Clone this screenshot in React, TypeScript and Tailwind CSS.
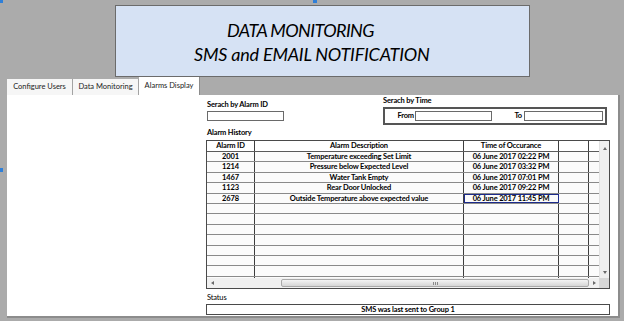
import React from 'react';

type Alarm = { id: string; desc: string; time: string };

const ALARMS: Alarm[] = [
  { id: '2001', desc: 'Temperature exceeding Set Limit', time: '06 June 2017 02:22 PM' },
  { id: '1214', desc: 'Pressure below Expected Level', time: '06 June 2017 03:32 PM' },
  { id: '1467', desc: 'Water Tank Empty', time: '06 June 2017 07:01 PM' },
  { id: '1123', desc: 'Rear Door Unlocked', time: '06 June 2017 09:22 PM' },
  { id: '2678', desc: 'Outside Temperature above expected value', time: '06 June 2017 11:45 PM' },
];

const EMPTY_ROWS = 8;

const TableRow = ({ alarm, selected }: { alarm?: Alarm; selected?: boolean }) => (
  <div className="flex h-[10.4px] shrink-0 border-b border-[#8a8a8a] bg-[#fbfbfb]">
    <div className="w-[48px] border-r border-[#3d3d3d] flex items-center justify-center">{alarm?.id}</div>
    <div className="w-[209px] border-r border-[#3d3d3d] flex items-center justify-center whitespace-nowrap overflow-hidden">
      {alarm?.desc}
    </div>
    <div
      className={
        selected
          ? 'w-[95px] border-r border-[#3d3d3d] flex items-center justify-center outline outline-1 -outline-offset-1 outline-[#1c2a8a]'
          : 'w-[95px] border-r border-[#3d3d3d] flex items-center justify-center'
      }
    >
      {alarm?.time}
    </div>
    <div className="w-[30px] border-r border-[#3d3d3d]"></div>
    <div className="w-[10px]"></div>
  </div>
);

const Arrow = ({ dir }: { dir: 'up' | 'down' | 'left' | 'right' }) => {
  const pts = {
    up: '0,3 2,0 4,3',
    down: '0,0 2,3 4,0',
    left: '3,0 0,2 3,4',
    right: '0,0 3,2 0,4',
  }[dir];
  const size = dir === 'up' || dir === 'down' ? { w: 4, h: 3 } : { w: 3, h: 4 };
  return (
    <svg width={size.w} height={size.h} viewBox={`0 0 ${size.w} ${size.h}`}>
      <polygon points={pts} fill="#6a6a6a" />
    </svg>
  );
};

const App: React.FC = () => {
  return (
    <div className="relative w-[624px] h-[321px] overflow-hidden bg-[#ababab] font-['Lato','Noto_Sans',sans-serif] text-black">
      {/* designer selection handles */}
      <div className="absolute left-0 top-0 w-[3px] h-[3px] bg-[#2f7fd8]"></div>
      <div className="absolute left-[313px] top-0 w-[4px] h-[3px] bg-[#2f7fd8]"></div>
      <div className="absolute left-0 top-[168px] w-[3px] h-[4px] bg-[#2f7fd8]"></div>

      {/* title banner */}
      <div className="pt-[5px]">
        <div className="ml-[115px] w-[415px] h-[72px] border border-[#6b6b6b] bg-[#d6e2f4] pt-[12px] italic text-[18px] leading-[24px] text-black">
          <div className="ml-[111px] tracking-[-0.6px]">DATA MONITORING</div>
          <div className="ml-[78px] tracking-[-0.2px]">SMS and EMAIL NOTIFICATION</div>
        </div>
      </div>

      {/* tabs */}
      <div className="ml-[7px] flex items-end h-[18px] text-[7.5px] text-[#222]">
        <div className="w-[66px] h-[16px] bg-[#f6f6f6] border-r border-[#a3a3a3] flex items-center justify-center">
          Configure Users
        </div>
        <div className="w-[66px] h-[16px] bg-[#f6f6f6] border-r border-[#a3a3a3] flex items-center justify-center">
          Data Monitoring
        </div>
        <div className="w-[61px] h-[18px] bg-white border-r border-[#8c8c8c] flex items-start justify-center pt-[3px]">
          Alarms Display
        </div>
      </div>

      {/* tab panel */}
      <div className="ml-[7px] w-[613px] h-[223px] bg-white border-r-2 border-b-2 border-[#8c8c8c] pl-[199px] text-[7.5px] font-bold tracking-[-0.15px]">
        <div className="flex">
          <div className="w-[177px] pt-[5px]">
            <div className="h-[10px] leading-[10px] pl-[1px]">Serach by Alarm ID</div>
            <div className="mt-[1px] ml-[1px] w-[77px] h-[10px] border border-[#6a6a6a] bg-white"></div>
          </div>
          <div className="pt-[1px]">
            <div className="h-[10px] leading-[10px]">Serach by Time</div>
            <div className="mt-[1px] w-[224px] h-[18px] border-2 border-[#555] flex items-center">
              <div className="w-[30px] text-right pr-[1px]">From</div>
              <div className="w-[77px] h-[10px] border border-[#6a6a6a] bg-white"></div>
              <div className="w-[32px] text-right pr-[2px]">To</div>
              <div className="w-[79px] h-[10px] border border-[#6a6a6a] bg-white"></div>
            </div>
          </div>
        </div>

        <div className="mt-[3px] h-[10px] leading-[10px] pl-[1px]">Alarm History</div>

        {/* alarm table */}
        <div className="mt-[2px] w-[404px] border border-[#4a4a4a]">
          <div className="flex">
            <div className="w-[392px] h-[137px] overflow-hidden flex flex-col">
              <div className="flex h-[11px] shrink-0 border-b border-[#5a5a5a] bg-white">
                <div className="w-[48px] border-r border-[#3d3d3d] flex items-center justify-center">Alarm ID</div>
                <div className="w-[209px] border-r border-[#3d3d3d] flex items-center justify-center">Alarm Description</div>
                <div className="w-[95px] border-r border-[#3d3d3d] flex items-center justify-center">Time of Occurance</div>
                <div className="w-[30px] border-r border-[#3d3d3d]"></div>
                <div className="w-[10px]"></div>
              </div>
              {ALARMS.map((a, i) => (
                <TableRow key={a.id} alarm={a} selected={i === ALARMS.length - 1} />
              ))}
              {Array.from({ length: EMPTY_ROWS }).map((_, i) => (
                <TableRow key={`empty-${i}`} />
              ))}
            </div>
            <div className="w-[10px] h-[137px] bg-[#f0f0f0] border-l border-[#e2e2e2] flex flex-col items-center justify-between pt-[6px] pb-[4px]">
              <Arrow dir="up" />
              <Arrow dir="down" />
            </div>
          </div>
          <div className="flex h-[10px]">
            <div className="w-[392px] bg-[#f0f0f0] flex items-center">
              <div className="w-[10px] flex justify-center">
                <Arrow dir="left" />
              </div>
              <div className="ml-[64px] w-[308px] h-[8px] rounded-[2px] border border-[#a9a9a9] bg-gradient-to-b from-[#f4f4f4] to-[#d6d6d6] flex items-center justify-center">
                <div className="flex gap-[1px]">
                  <div className="w-[1px] h-[3px] bg-[#8a8a8a]"></div>
                  <div className="w-[1px] h-[3px] bg-[#8a8a8a]"></div>
                  <div className="w-[1px] h-[3px] bg-[#8a8a8a]"></div>
                </div>
              </div>
              <div className="flex-1 flex justify-center">
                <Arrow dir="right" />
              </div>
            </div>
            <div className="w-[10px] bg-[#d8d8d8]"></div>
          </div>
        </div>

        <div className="mt-[4px] h-[10px] leading-[10px] pl-[1px] font-normal">Status</div>
        <div className="mt-[1px] w-[404px] h-[11px] border border-[#4a4a4a] flex items-center justify-center">
          SMS was last sent to Group 1
        </div>
      </div>
    </div>
  );
};

export default App;
